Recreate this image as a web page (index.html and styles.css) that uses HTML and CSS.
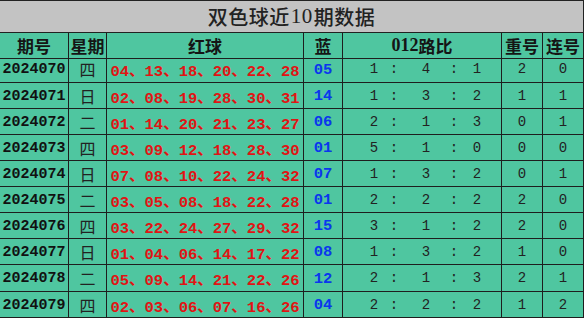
FILE: index.html
```html
<!DOCTYPE html>
<html lang="zh">
<head>
<meta charset="utf-8">
<title>双色球近10期数据</title>
<link rel="stylesheet" href="styles.css">
</head>
<body>
<div class="sheet">
  <div class="title">双色球近<span class="tnum">10</span>期数据</div>
  <div class="row head">
    <div class="c c1">期号</div><div class="c c2">星期</div><div class="c c3">红球</div><div class="c c4">蓝</div><div class="c c5"><span class="hnum">012</span>路比</div><div class="c c6">重号</div><div class="c c7">连号</div>
  </div>
  <div class="row tall">
    <div class="c c1 per">2024070</div><div class="c c2 day">四</div><div class="c c3 red">04、13、18、20、22、28</div><div class="c c4 blue">05</div><div class="c c5 ratio"><span>1</span><span>:</span><span>4</span><span>:</span><span>1</span></div><div class="c c6 num">2</div><div class="c c7 num">0</div>
  </div>
  <div class="row">
    <div class="c c1 per">2024071</div><div class="c c2 day">日</div><div class="c c3 red">02、08、19、28、30、31</div><div class="c c4 blue">14</div><div class="c c5 ratio"><span>1</span><span>:</span><span>3</span><span>:</span><span>2</span></div><div class="c c6 num">1</div><div class="c c7 num">1</div>
  </div>
  <div class="row">
    <div class="c c1 per">2024072</div><div class="c c2 day">二</div><div class="c c3 red">01、14、20、21、23、27</div><div class="c c4 blue">06</div><div class="c c5 ratio"><span>2</span><span>:</span><span>1</span><span>:</span><span>3</span></div><div class="c c6 num">0</div><div class="c c7 num">1</div>
  </div>
  <div class="row">
    <div class="c c1 per">2024073</div><div class="c c2 day">四</div><div class="c c3 red">03、09、12、18、28、30</div><div class="c c4 blue">01</div><div class="c c5 ratio"><span>5</span><span>:</span><span>1</span><span>:</span><span>0</span></div><div class="c c6 num">0</div><div class="c c7 num">0</div>
  </div>
  <div class="row">
    <div class="c c1 per">2024074</div><div class="c c2 day">日</div><div class="c c3 red">07、08、10、22、24、32</div><div class="c c4 blue">07</div><div class="c c5 ratio"><span>1</span><span>:</span><span>3</span><span>:</span><span>2</span></div><div class="c c6 num">0</div><div class="c c7 num">1</div>
  </div>
  <div class="row">
    <div class="c c1 per">2024075</div><div class="c c2 day">二</div><div class="c c3 red">03、05、08、18、22、28</div><div class="c c4 blue">01</div><div class="c c5 ratio"><span>2</span><span>:</span><span>2</span><span>:</span><span>2</span></div><div class="c c6 num">2</div><div class="c c7 num">0</div>
  </div>
  <div class="row">
    <div class="c c1 per">2024076</div><div class="c c2 day">四</div><div class="c c3 red">03、22、24、27、29、32</div><div class="c c4 blue">15</div><div class="c c5 ratio"><span>3</span><span>:</span><span>1</span><span>:</span><span>2</span></div><div class="c c6 num">2</div><div class="c c7 num">0</div>
  </div>
  <div class="row">
    <div class="c c1 per">2024077</div><div class="c c2 day">日</div><div class="c c3 red">01、04、06、14、17、22</div><div class="c c4 blue">08</div><div class="c c5 ratio"><span>1</span><span>:</span><span>3</span><span>:</span><span>2</span></div><div class="c c6 num">1</div><div class="c c7 num">0</div>
  </div>
  <div class="row tall">
    <div class="c c1 per">2024078</div><div class="c c2 day">二</div><div class="c c3 red">05、09、14、21、22、26</div><div class="c c4 blue">12</div><div class="c c5 ratio"><span>2</span><span>:</span><span>1</span><span>:</span><span>3</span></div><div class="c c6 num">2</div><div class="c c7 num">1</div>
  </div>
  <div class="row">
    <div class="c c1 per">2024079</div><div class="c c2 day">四</div><div class="c c3 red">02、03、06、07、16、26</div><div class="c c4 blue">04</div><div class="c c5 ratio"><span>2</span><span>:</span><span>2</span><span>:</span><span>2</span></div><div class="c c6 num">1</div><div class="c c7 num">2</div>
  </div>
</div>
</body>
</html>
```
FILE: styles.css
```css
html, body {
  margin: 0;
  padding: 0;
  background: #ffffff;
}
.sheet {
  width: 584px;
  font-family: "Noto Sans CJK SC", sans-serif;
  color: #1a1a1a;
}
.title {
  box-sizing: border-box;
  height: 33px;
  background: #c3c3c3;
  border-top: 1px solid #222;
  border-bottom: 1px solid #222;
  border-right: 1px solid #222;
  display: flex;
  align-items: center;
  justify-content: center;
  font-size: 20px;
  font-weight: 500;
  color: #222;
  letter-spacing: 0.5px;
}
.tnum {
  font-family: "Liberation Serif", serif;
  font-size: 21px;
  margin: 0 1px;
}
.row {
  display: grid;
  grid-template-columns: 69px 38px 197px 39px 159px 41px 41px;
  height: 26px;
  background: #4fc6a0;
}
.row.head { height: 23px; }
.row.tall { height: 27px; }
.c {
  box-sizing: border-box;
  border-right: 1px solid #1e1e1e;
  border-bottom: 1px solid #1e1e1e;
  display: flex;
  align-items: center;
  justify-content: center;
  white-space: pre;
}
.head .c {
  font-size: 17px;
  font-weight: 700;
  color: #151515;
}
.hnum {
  font-family: "Liberation Serif", serif;
  font-size: 18px;
  font-weight: 700;
}
.per {
  font-family: "Liberation Mono", monospace;
  font-size: 15px;
  font-weight: 700;
  color: #111;
  padding-top: 1px;
}
.day {
  font-size: 16px;
  font-weight: 400;
  color: #222;
}
.red {
  font-family: "Liberation Mono", "Noto Sans CJK SC", monospace;
  font-size: 15.5px;
  font-weight: 700;
  color: #e01414;
  padding-top: 1px;
}
.blue {
  font-family: "Liberation Mono", monospace;
  font-size: 15.5px;
  font-weight: 700;
  color: #0a36ee;
  padding-top: 1px;
}
.ratio {
  display: grid;
  grid-template-columns: 20px 20px 44px 12px 34px;
  justify-content: start;
  padding-left: 21px;
  font-family: "Liberation Mono", monospace;
  font-size: 14px;
  color: #222;
}
.ratio span {
  text-align: center;
}
.num {
  font-family: "Liberation Mono", monospace;
  font-size: 14px;
  color: #222;
}
```
